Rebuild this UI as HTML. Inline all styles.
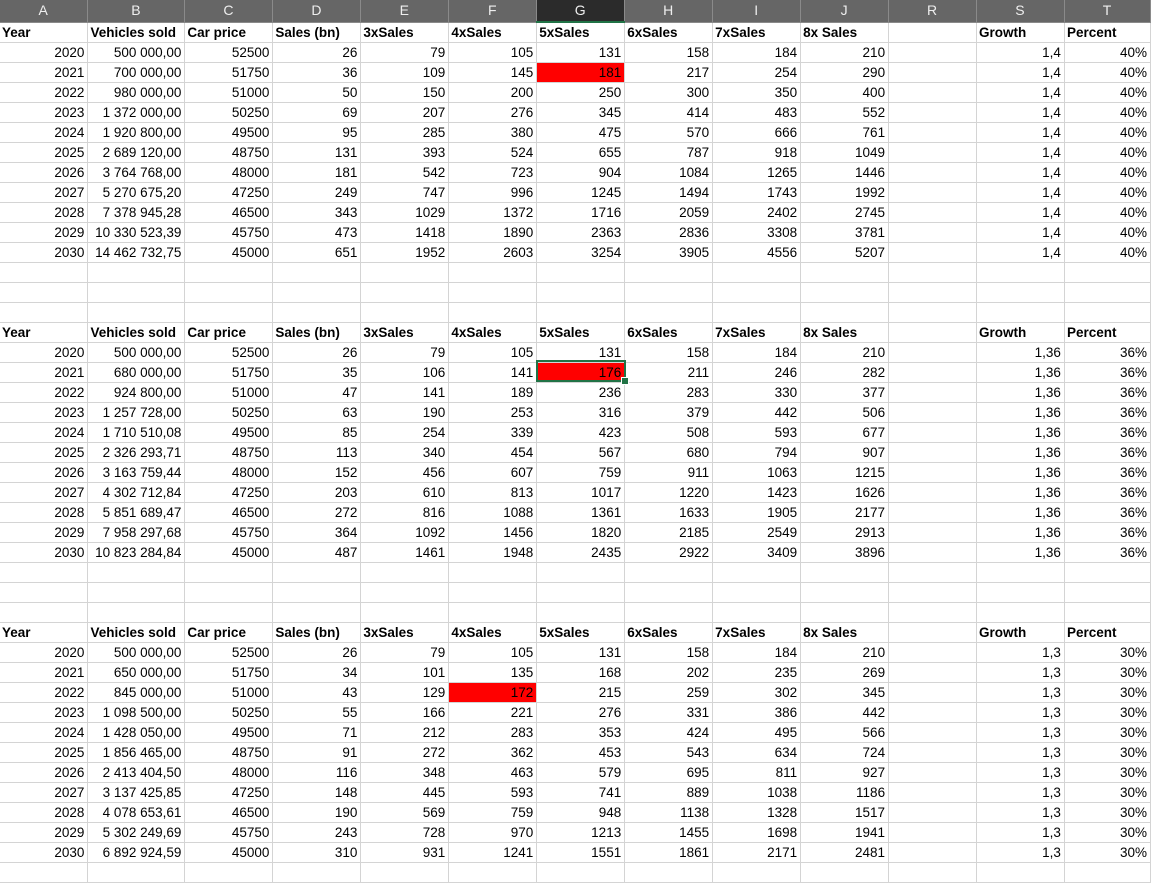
<!DOCTYPE html>
<html><head><meta charset="utf-8"><style>
body{margin:0;background:#fff;width:1151px;height:865px;overflow:hidden;font-family:"Liberation Sans",Arial,sans-serif;font-size:13.5px;color:#000}
table{border-collapse:collapse;table-layout:fixed;position:absolute;left:0;top:0}
td{border-right:1px solid #d4d4d4;border-bottom:1px solid #d4d4d4;height:19px;padding:0 3px 0 2px;text-align:right;white-space:nowrap;overflow:hidden;line-height:19px}
tr.h td{background:#666;color:#eee;text-align:center;border-color:#8a8a8a;height:21px;font-size:14px}
tr.h td.g{background:#2b2b2b;border-bottom:2px solid #217346}
tr.b td{font-weight:bold;text-align:left}
td.r{background:#f00}
.sel{position:absolute;left:536px;top:360px;width:86px;height:18px;border:2px solid #217346}
.sel:after{content:"";position:absolute;right:-5px;bottom:-5px;width:6px;height:6px;background:#217346;border:1px solid #fff}
</style></head><body>
<table>
<colgroup><col style="width:88px"><col style="width:97px"><col style="width:88px"><col style="width:88px"><col style="width:88px"><col style="width:88px"><col style="width:88px"><col style="width:88px"><col style="width:88px"><col style="width:88px"><col style="width:88px"><col style="width:88px"><col style="width:86px"></colgroup>
<tr class="h"><td>A</td><td>B</td><td>C</td><td>D</td><td>E</td><td>F</td><td class="g">G</td><td>H</td><td>I</td><td>J</td><td>R</td><td>S</td><td>T</td></tr>
<tr class="b"><td>Year</td><td>Vehicles sold</td><td>Car price</td><td>Sales (bn)</td><td>3xSales</td><td>4xSales</td><td>5xSales</td><td>6xSales</td><td>7xSales</td><td>8x Sales</td><td></td><td>Growth</td><td>Percent</td></tr>
<tr><td>2020</td><td>500 000,00</td><td>52500</td><td>26</td><td>79</td><td>105</td><td>131</td><td>158</td><td>184</td><td>210</td><td></td><td>1,4</td><td>40%</td></tr>
<tr><td>2021</td><td>700 000,00</td><td>51750</td><td>36</td><td>109</td><td>145</td><td class="r">181</td><td>217</td><td>254</td><td>290</td><td></td><td>1,4</td><td>40%</td></tr>
<tr><td>2022</td><td>980 000,00</td><td>51000</td><td>50</td><td>150</td><td>200</td><td>250</td><td>300</td><td>350</td><td>400</td><td></td><td>1,4</td><td>40%</td></tr>
<tr><td>2023</td><td>1 372 000,00</td><td>50250</td><td>69</td><td>207</td><td>276</td><td>345</td><td>414</td><td>483</td><td>552</td><td></td><td>1,4</td><td>40%</td></tr>
<tr><td>2024</td><td>1 920 800,00</td><td>49500</td><td>95</td><td>285</td><td>380</td><td>475</td><td>570</td><td>666</td><td>761</td><td></td><td>1,4</td><td>40%</td></tr>
<tr><td>2025</td><td>2 689 120,00</td><td>48750</td><td>131</td><td>393</td><td>524</td><td>655</td><td>787</td><td>918</td><td>1049</td><td></td><td>1,4</td><td>40%</td></tr>
<tr><td>2026</td><td>3 764 768,00</td><td>48000</td><td>181</td><td>542</td><td>723</td><td>904</td><td>1084</td><td>1265</td><td>1446</td><td></td><td>1,4</td><td>40%</td></tr>
<tr><td>2027</td><td>5 270 675,20</td><td>47250</td><td>249</td><td>747</td><td>996</td><td>1245</td><td>1494</td><td>1743</td><td>1992</td><td></td><td>1,4</td><td>40%</td></tr>
<tr><td>2028</td><td>7 378 945,28</td><td>46500</td><td>343</td><td>1029</td><td>1372</td><td>1716</td><td>2059</td><td>2402</td><td>2745</td><td></td><td>1,4</td><td>40%</td></tr>
<tr><td>2029</td><td>10 330 523,39</td><td>45750</td><td>473</td><td>1418</td><td>1890</td><td>2363</td><td>2836</td><td>3308</td><td>3781</td><td></td><td>1,4</td><td>40%</td></tr>
<tr><td>2030</td><td>14 462 732,75</td><td>45000</td><td>651</td><td>1952</td><td>2603</td><td>3254</td><td>3905</td><td>4556</td><td>5207</td><td></td><td>1,4</td><td>40%</td></tr>
<tr><td></td><td></td><td></td><td></td><td></td><td></td><td></td><td></td><td></td><td></td><td></td><td></td><td></td></tr>
<tr><td></td><td></td><td></td><td></td><td></td><td></td><td></td><td></td><td></td><td></td><td></td><td></td><td></td></tr>
<tr><td></td><td></td><td></td><td></td><td></td><td></td><td></td><td></td><td></td><td></td><td></td><td></td><td></td></tr>
<tr class="b"><td>Year</td><td>Vehicles sold</td><td>Car price</td><td>Sales (bn)</td><td>3xSales</td><td>4xSales</td><td>5xSales</td><td>6xSales</td><td>7xSales</td><td>8x Sales</td><td></td><td>Growth</td><td>Percent</td></tr>
<tr><td>2020</td><td>500 000,00</td><td>52500</td><td>26</td><td>79</td><td>105</td><td>131</td><td>158</td><td>184</td><td>210</td><td></td><td>1,36</td><td>36%</td></tr>
<tr><td>2021</td><td>680 000,00</td><td>51750</td><td>35</td><td>106</td><td>141</td><td class="r">176</td><td>211</td><td>246</td><td>282</td><td></td><td>1,36</td><td>36%</td></tr>
<tr><td>2022</td><td>924 800,00</td><td>51000</td><td>47</td><td>141</td><td>189</td><td>236</td><td>283</td><td>330</td><td>377</td><td></td><td>1,36</td><td>36%</td></tr>
<tr><td>2023</td><td>1 257 728,00</td><td>50250</td><td>63</td><td>190</td><td>253</td><td>316</td><td>379</td><td>442</td><td>506</td><td></td><td>1,36</td><td>36%</td></tr>
<tr><td>2024</td><td>1 710 510,08</td><td>49500</td><td>85</td><td>254</td><td>339</td><td>423</td><td>508</td><td>593</td><td>677</td><td></td><td>1,36</td><td>36%</td></tr>
<tr><td>2025</td><td>2 326 293,71</td><td>48750</td><td>113</td><td>340</td><td>454</td><td>567</td><td>680</td><td>794</td><td>907</td><td></td><td>1,36</td><td>36%</td></tr>
<tr><td>2026</td><td>3 163 759,44</td><td>48000</td><td>152</td><td>456</td><td>607</td><td>759</td><td>911</td><td>1063</td><td>1215</td><td></td><td>1,36</td><td>36%</td></tr>
<tr><td>2027</td><td>4 302 712,84</td><td>47250</td><td>203</td><td>610</td><td>813</td><td>1017</td><td>1220</td><td>1423</td><td>1626</td><td></td><td>1,36</td><td>36%</td></tr>
<tr><td>2028</td><td>5 851 689,47</td><td>46500</td><td>272</td><td>816</td><td>1088</td><td>1361</td><td>1633</td><td>1905</td><td>2177</td><td></td><td>1,36</td><td>36%</td></tr>
<tr><td>2029</td><td>7 958 297,68</td><td>45750</td><td>364</td><td>1092</td><td>1456</td><td>1820</td><td>2185</td><td>2549</td><td>2913</td><td></td><td>1,36</td><td>36%</td></tr>
<tr><td>2030</td><td>10 823 284,84</td><td>45000</td><td>487</td><td>1461</td><td>1948</td><td>2435</td><td>2922</td><td>3409</td><td>3896</td><td></td><td>1,36</td><td>36%</td></tr>
<tr><td></td><td></td><td></td><td></td><td></td><td></td><td></td><td></td><td></td><td></td><td></td><td></td><td></td></tr>
<tr><td></td><td></td><td></td><td></td><td></td><td></td><td></td><td></td><td></td><td></td><td></td><td></td><td></td></tr>
<tr><td></td><td></td><td></td><td></td><td></td><td></td><td></td><td></td><td></td><td></td><td></td><td></td><td></td></tr>
<tr class="b"><td>Year</td><td>Vehicles sold</td><td>Car price</td><td>Sales (bn)</td><td>3xSales</td><td>4xSales</td><td>5xSales</td><td>6xSales</td><td>7xSales</td><td>8x Sales</td><td></td><td>Growth</td><td>Percent</td></tr>
<tr><td>2020</td><td>500 000,00</td><td>52500</td><td>26</td><td>79</td><td>105</td><td>131</td><td>158</td><td>184</td><td>210</td><td></td><td>1,3</td><td>30%</td></tr>
<tr><td>2021</td><td>650 000,00</td><td>51750</td><td>34</td><td>101</td><td>135</td><td>168</td><td>202</td><td>235</td><td>269</td><td></td><td>1,3</td><td>30%</td></tr>
<tr><td>2022</td><td>845 000,00</td><td>51000</td><td>43</td><td>129</td><td class="r">172</td><td>215</td><td>259</td><td>302</td><td>345</td><td></td><td>1,3</td><td>30%</td></tr>
<tr><td>2023</td><td>1 098 500,00</td><td>50250</td><td>55</td><td>166</td><td>221</td><td>276</td><td>331</td><td>386</td><td>442</td><td></td><td>1,3</td><td>30%</td></tr>
<tr><td>2024</td><td>1 428 050,00</td><td>49500</td><td>71</td><td>212</td><td>283</td><td>353</td><td>424</td><td>495</td><td>566</td><td></td><td>1,3</td><td>30%</td></tr>
<tr><td>2025</td><td>1 856 465,00</td><td>48750</td><td>91</td><td>272</td><td>362</td><td>453</td><td>543</td><td>634</td><td>724</td><td></td><td>1,3</td><td>30%</td></tr>
<tr><td>2026</td><td>2 413 404,50</td><td>48000</td><td>116</td><td>348</td><td>463</td><td>579</td><td>695</td><td>811</td><td>927</td><td></td><td>1,3</td><td>30%</td></tr>
<tr><td>2027</td><td>3 137 425,85</td><td>47250</td><td>148</td><td>445</td><td>593</td><td>741</td><td>889</td><td>1038</td><td>1186</td><td></td><td>1,3</td><td>30%</td></tr>
<tr><td>2028</td><td>4 078 653,61</td><td>46500</td><td>190</td><td>569</td><td>759</td><td>948</td><td>1138</td><td>1328</td><td>1517</td><td></td><td>1,3</td><td>30%</td></tr>
<tr><td>2029</td><td>5 302 249,69</td><td>45750</td><td>243</td><td>728</td><td>970</td><td>1213</td><td>1455</td><td>1698</td><td>1941</td><td></td><td>1,3</td><td>30%</td></tr>
<tr><td>2030</td><td>6 892 924,59</td><td>45000</td><td>310</td><td>931</td><td>1241</td><td>1551</td><td>1861</td><td>2171</td><td>2481</td><td></td><td>1,3</td><td>30%</td></tr>
<tr><td></td><td></td><td></td><td></td><td></td><td></td><td></td><td></td><td></td><td></td><td></td><td></td><td></td></tr>
</table>
<div class="sel"></div>
</body></html>
